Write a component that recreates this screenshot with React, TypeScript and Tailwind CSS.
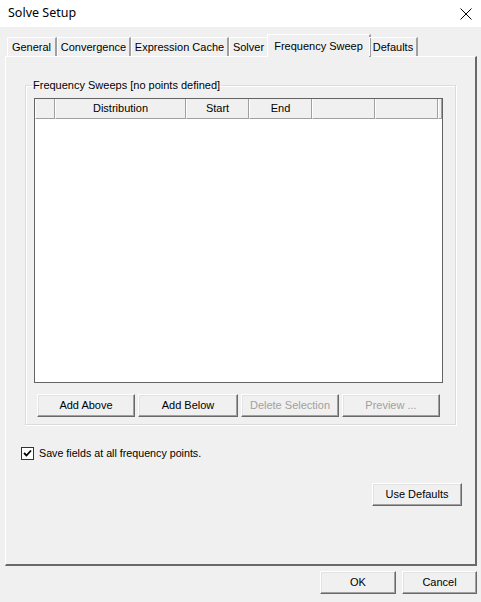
import React from "react";

const tabs = [
  { t: "General", w: "w-[50px]" },
  { t: "Convergence", w: "w-[74px]" },
  { t: "Expression Cache", w: "w-[98px]" },
  { t: "Solver", w: "w-[40px]" },
  { t: "Frequency Sweep", w: "w-[104px]" },
  { t: "Defaults", w: "w-[49px]" },
];
const cols = [
  { label: "", w: "w-[20px]" },
  { label: "Distribution", w: "w-[131px]" },
  { label: "Start", w: "w-[63px]" },
  { label: "End", w: "w-[63px]" },
  { label: "", w: "w-[63px]" },
  { label: "", w: "w-[63px]" },
  { label: "", w: "w-[4px]" },
];

function Btn({ label, disabled, w }: { label: string; disabled?: boolean; w: string }) {
  return (
    <button
      className={`${w} h-[23px] bg-[#f0f0f0] border border-t-white border-l-white border-r-[#696969] border-b-[#696969] shadow-[inset_-1px_-1px_0_#a0a0a0,inset_1px_1px_0_#e3e3e3] text-[11px] ${
        disabled ? "text-[#a0a0a0]" : "text-black"
      }`}
    >
      {label}
    </button>
  );
}

export default function App() {
  return (
    <div
      className="w-[481px] h-[602px] bg-[#f0f0f0] flex flex-col overflow-hidden"
      style={{ fontFamily: '"Liberation Sans", Arial, sans-serif' }}
    >
      {/* title bar */}
      <div className="h-[27px] bg-white flex items-center justify-between pl-[8px] pr-[9px] shrink-0">
        <span className="text-[12.5px] text-black" style={{ fontFamily: '"Noto Sans", sans-serif' }}>Solve Setup</span>
        <svg width="12" height="12" viewBox="0 0 12 12">
          <path d="M0.5 0.5 L11.5 11.5 M11.5 0.5 L0.5 11.5" stroke="#000" strokeWidth="1" />
        </svg>
      </div>

      {/* tabs */}
      <div className="flex items-end pl-[7px] mt-[7px] h-[22px] shrink-0 relative z-10">
        {tabs.map(({ t, w }) => {
          const active = t === "Frequency Sweep";
          return active ? (
            <div
              key={t}
              className={`${w} h-[23px] -mb-[1px] -mx-[2px] bg-[#f0f0f0] border-t border-l border-white border-r-2 border-r-[#a0a0a0] flex justify-center items-start pt-[3px] text-[11px] text-black shrink-0`}
            >
              {t}
            </div>
          ) : (
            <div
              key={t}
              className={`${w} h-[19px] border-t border-l border-white border-r-2 border-r-[#a0a0a0] flex justify-center items-center text-[11px] text-black shrink-0`}
            >
              {t}
            </div>
          );
        })}
      </div>

      {/* panel */}
      <div className="ml-[5px] w-[472px] h-[510px] shrink-0 border-t border-l border-white border-r-2 border-b-2 border-r-[#696969] border-b-[#696969] flex flex-col">
        <fieldset className="ml-[19px] mt-[21px] w-[431px] h-[347px] border border-[#dcdcdc] shadow-[inset_1px_1px_0_#fff,1px_1px_0_#fff] px-[8px]">
          <legend className="-ml-[2px] px-[1px] text-[11px] text-black leading-[14px]">
            Frequency Sweeps [no points defined]
          </legend>
          <div className="mt-[6px] w-[409px] h-[285px] border border-[#646464] bg-white flex flex-col">
            <div className="flex h-[20px] shrink-0">
              {cols.map((c, i) => (
                <div
                  key={i}
                  className={`${c.w} h-[20px] bg-[#f0f0f0] border-l border-l-white border-r border-r-[#a0a0a0] border-b border-b-[#a0a0a0] flex items-center justify-center text-[11px] text-black shrink-0`}
                >
                  {c.label}
                </div>
              ))}
            </div>
          </div>
          <div className="flex gap-[3px] mt-[11px] ml-[3px]">
            <Btn label="Add Above" w="w-[98px]" />
            <Btn label="Add Below" w="w-[100px]" />
            <Btn label="Delete Selection" w="w-[98px]" disabled />
            <Btn label="Preview ..." w="w-[98px]" disabled />
          </div>
        </fieldset>

        <div className="flex items-center ml-[15px] mt-[20px] gap-[5px]">
          <div className="w-[13px] h-[13px] bg-white border border-[#333] flex items-center justify-center">
            <svg width="9" height="9" viewBox="0 0 9 9">
              <path d="M1 4 L3.5 6.5 L8 1.5" stroke="#000" strokeWidth="1.8" fill="none" />
            </svg>
          </div>
          <span className="text-[10.7px] text-black">Save fields at all frequency points.</span>
        </div>

        <div className="flex justify-end mr-[13px] mt-[22px]">
          <Btn label="Use Defaults" w="w-[90px]" />
        </div>
      </div>

      {/* footer */}
      <div className="flex justify-end gap-[6px] mr-[4px] mt-[5px]">
        <Btn label="OK" w="w-[76px]" />
        <Btn label="Cancel" w="w-[75px]" />
      </div>
    </div>
  );
}
